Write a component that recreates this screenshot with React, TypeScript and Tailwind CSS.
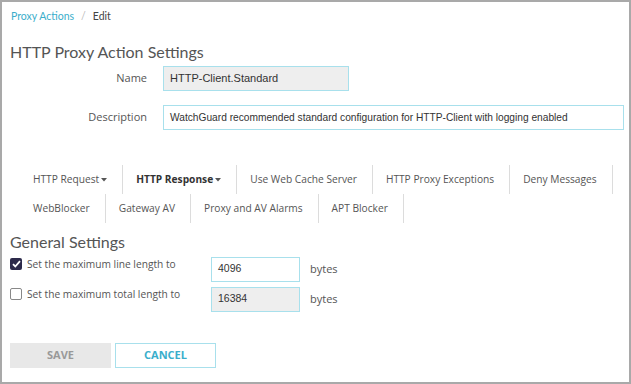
import { useState } from "react";

const tabsRow1 = [
  { label: "HTTP Request", caret: true },
  { label: "HTTP Response", caret: true, active: true },
  { label: "Use Web Cache Server" },
  { label: "HTTP Proxy Exceptions" },
  { label: "Deny Messages" },
];

const tabsRow2 = [
  { label: "WebBlocker" },
  { label: "Gateway AV" },
  { label: "Proxy and AV Alarms" },
  { label: "APT Blocker" },
];

type Tab = { label: string; caret?: boolean; active?: boolean };

function TabRow({ tabs }: { tabs: Tab[] }) {
  return (
    <div className="flex h-[29px] items-stretch">
      {tabs.map((t) => (
        <div
          key={t.label}
          className={`flex items-center whitespace-nowrap border-r border-[#dcdcdc] pl-[13px] pr-[15px] text-[10.2px] ${
            t.active ? "font-bold text-[#333]" : "text-[#555]"
          }`}
        >
          {t.label}
          {t.caret && (
            <svg width="6" height="4" viewBox="0 0 6 4" className="ml-[2px] mt-[1px]">
              <path d="M0 0h6L3 3.5z" fill="#555" />
            </svg>
          )}
        </div>
      ))}
    </div>
  );
}

function Checkbox({ checked, onClick }: { checked: boolean; onClick: () => void }) {
  return (
    <button
      onClick={onClick}
      className={`flex h-[12px] w-[12px] shrink-0 items-center justify-center rounded-[2px] ${
        checked ? "bg-[#2c2a4a]" : "border border-[#888] bg-white"
      }`}
    >
      {checked && (
        <svg width="9" height="8" viewBox="0 0 9 8">
          <path d="M1 4.2l2.3 2.3L8 1.2" stroke="#fff" strokeWidth="1.8" fill="none" />
        </svg>
      )}
    </button>
  );
}

export default function App() {
  const [lineLimit, setLineLimit] = useState(true);
  const [totalLimit, setTotalLimit] = useState(false);

  return (
    <div
      className="h-[384px] w-[631px] overflow-hidden border-2 border-[#a9a9a9] bg-white text-[#555]"
      style={{ fontFamily: '"Open Sans", sans-serif' }}
    >
      <div className="flex items-center gap-[7px] pl-[9px] pt-[7px] text-[10.5px]" style={{ fontFamily: "Lato, sans-serif" }}>
        <span className="text-[#3aaecb]">Proxy Actions</span>
        <span className="text-[#bbb]">/</span>
        <span className="text-[#444]">Edit</span>
      </div>

      <h1 className="pl-[8px] pt-[17px] text-[16px] leading-[20px] text-[#555]" style={{ fontFamily: "Lato, sans-serif" }}>
        HTTP Proxy Action Settings
      </h1>

      <div className="mt-[4px] flex items-center">
        <label className="w-[145px] text-right text-[11px]">Name</label>
        <div
          className="ml-[16px] flex h-[25px] w-[186px] items-center border border-[#a8e0ec] bg-[#eeeeee] px-[6px] text-[11px] text-[#333]"
          style={{ fontFamily: '"Liberation Sans", Arial, sans-serif' }}
        >
          HTTP-Client.Standard
        </div>
      </div>

      <div className="mt-[14px] flex items-center">
        <label className="w-[145px] text-right text-[11px]">Description</label>
        <div
          className="ml-[16px] flex h-[25px] w-[461px] items-center border border-[#a8e0ec] bg-white px-[6px] text-[10.2px] text-[#333]"
          style={{ fontFamily: '"Liberation Sans", Arial, sans-serif' }}
        >
          WatchGuard recommended standard configuration for HTTP-Client with logging enabled
        </div>
      </div>

      <div className="mt-[35px] pl-[18px]">
        <TabRow tabs={tabsRow1} />
        <TabRow tabs={tabsRow2} />
      </div>

      <h2 className="pl-[8px] pt-[9px] text-[16px] leading-[20px]" style={{ fontFamily: "Lato, sans-serif" }}>
        General Settings
      </h2>

      <div className="mt-[5px] flex items-start pl-[8px]">
        <div className="flex w-[201px] items-center gap-[5px]">
          <Checkbox checked={lineLimit} onClick={() => setLineLimit(!lineLimit)} />
          <span className="text-[10.2px]">Set the maximum line length to</span>
        </div>
        <div
          className="flex h-[25px] w-[89px] items-center border border-[#a8e0ec] bg-white px-[6px] text-[10.5px] text-[#333]"
          style={{ fontFamily: '"Liberation Sans", Arial, sans-serif' }}
        >
          4096
        </div>
        <span className="ml-[10px] self-center text-[11px]">bytes</span>
      </div>

      <div className="mt-[5px] flex items-start pl-[8px]">
        <div className="flex w-[201px] items-center gap-[5px]">
          <Checkbox checked={totalLimit} onClick={() => setTotalLimit(!totalLimit)} />
          <span className="text-[10.2px]">Set the maximum total length to</span>
        </div>
        <div
          className="flex h-[25px] w-[89px] items-center border border-[#a8e0ec] bg-[#eeeeee] px-[6px] text-[10.5px] text-[#333]"
          style={{ fontFamily: '"Liberation Sans", Arial, sans-serif' }}
        >
          16384
        </div>
        <span className="ml-[10px] self-center text-[11px]">bytes</span>
      </div>

      <div className="mt-[31px] flex gap-[4px] pl-[8px]">
        <button className="h-[25px] w-[101px] bg-[#e8e8e8] text-[11px] font-bold text-[#999]">SAVE</button>
        <button className="h-[25px] w-[101px] border border-[#a8e0ec] bg-white text-[11px] font-bold text-[#3aaecb]">
          CANCEL
        </button>
      </div>
    </div>
  );
}
